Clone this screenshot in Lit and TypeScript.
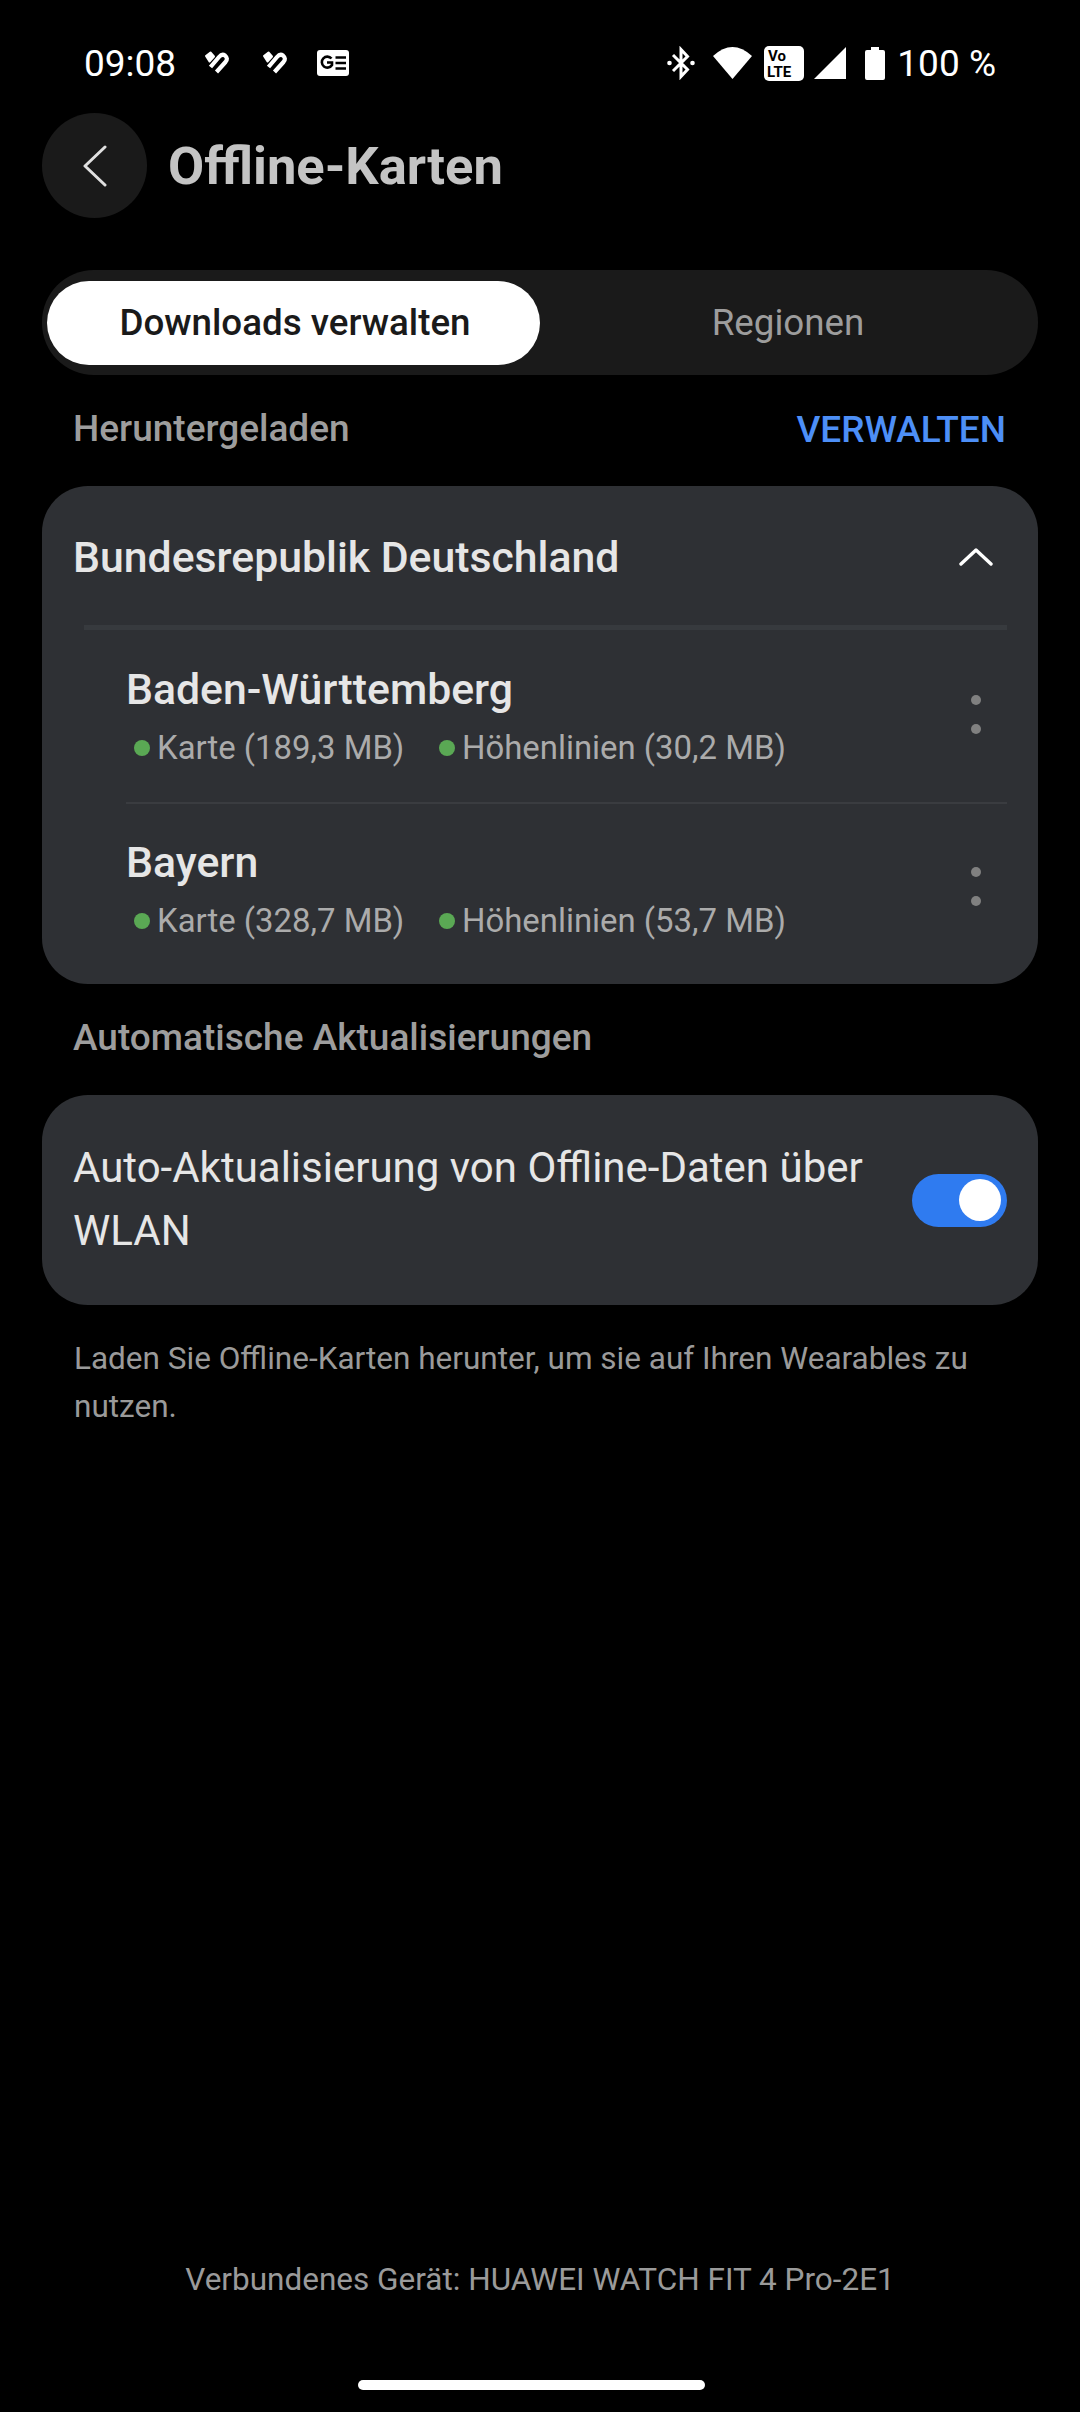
import { LitElement, html, css } from "lit";
import { customElement } from "lit/decorators.js";

const heart = html`<svg class="heart" viewBox="0 0 40 36" width="40" height="36">
  <path d="M11 11 L15.5 7.5 L19 11.5 L14.5 16.5 Z" fill="#fff" stroke="#fff" stroke-width="2" stroke-linejoin="round"/>
  <path d="M15.5 22 L24 12 Q27 8.5 30 10.5 Q33.5 13.5 30.5 17 L21.5 27" fill="none" stroke="#fff" stroke-width="4.2"/>
</svg>`;

const row = (name: string, a: string, b: string) => html`
  <div class="item">
    <div class="item-body">
      <div class="item-name">${name}</div>
      <div class="item-meta">
        <span class="tag a"><i class="dot"></i>${a}</span>
        <span class="tag"><i class="dot"></i>${b}</span>
      </div>
    </div>
    <div class="more"><i></i><i></i></div>
  </div>`;

@customElement("app-root")
export class AppRoot extends LitElement {
  static styles = css`
    :host {
      display: flex;
      flex-direction: column;
      width: 1080px;
      height: 2412px;
      background: #000;
      font-family: Roboto, "Noto Sans", sans-serif;
      color: #fff;
      overflow: hidden;
    }
    .status {
      height: 64px;
      padding: 31px 84px 0 84px;
      display: flex;
      align-items: center;
      box-sizing: content-box;
      flex: none;
    }
    .time { font-size: 37px; font-weight: 450; width: 111px; }
    .heart { margin-right: 18px; }
    .heart + .heart { margin-right: 24px; }
    .spacer { flex: 1; }
    .status-right { display: flex; align-items: center; }
    .m-wifi { margin-left: 18px; }
    .m-volte { margin-left: 12px; }
    .m-signal { margin-left: 10px; }
    .m-batt { margin-left: 19px; }
    .batt-text { font-size: 37px; margin-left: 12px; }
    .header {
      display: flex;
      align-items: center;
      margin: 18px 0 0 42px;
      flex: none;
    }
    .back {
      width: 105px;
      height: 105px;
      border-radius: 50%;
      background: #1a1a1a;
      display: flex;
      align-items: center;
      justify-content: center;
    }
    .title { font-size: 52.5px; font-weight: 700; color: #c4c4c4; margin-left: 21px; }
    .tabs {
      margin: 52px 42px 0;
      height: 105px;
      border-radius: 52px;
      background: #1a1a1a;
      display: flex;
      align-items: center;
      padding: 0 0 0 5px;
      flex: none;
    }
    .tab { flex: 1; text-align: center; font-size: 36.75px; color: #9d9d9d; }
    .tab.on {
      flex: none;
      width: 493px;
      height: 84px;
      line-height: 84px;
      padding-left: 3px;
      box-sizing: border-box;
      background: #fff;
      color: #1a1a1a;
      border-radius: 42px;
      font-weight: 500;
    }
    .tab.off { padding-right: 2px; }
    .sub-head {
      display: flex;
      justify-content: space-between;
      align-items: center;
      margin: 30px 74px 0 73px;
      height: 46px;
      flex: none;
    }
    .sub-head .l { font-size: 37px; color: #9d9d9d; font-weight: 500; }
    .sub-head .r { font-size: 37px; color: #4d8ff7; font-weight: 500; padding-top: 2px; }
    .card {
      margin: 35px 42px 0;
      background: #2e3034;
      border-radius: 46px;
      padding-bottom: 14px;
      flex: none;
    }
    .c-head {
      height: 139px;
      display: flex;
      align-items: center;
      justify-content: space-between;
      padding: 2px 45px 0 31px;
      box-sizing: border-box;
      font-size: 42.75px;
      font-weight: 500;
      color: #e6e6e6;
    }
    .rule { height: 5px; margin: 0 31px 0 42px; background: #373a3e; }
    .item {
      display: flex;
      align-items: center;
      padding: 0 31px 0 84px;
    }
    .item-body { flex: 1; border-bottom: 2px solid #3a3c40; height: 172px; }
    .item:last-child .item-body { border-bottom: none; height: 166px; }
    .item-name { font-size: 42.75px; font-weight: 500; color: #e6e6e6; margin-top: 36px; line-height: 47px; }
    .item:last-child .item-name { margin-top: 35px; }
    .item-meta { display: flex; margin-top: 16px; font-size: 32.9px; color: #ababab; line-height: 38px; }
    .tag { display: flex; align-items: center; }
    .tag.a { width: 305px; }
    .dot { width: 16px; height: 16px; border-radius: 50%; background: #5aa854; margin: 0 7px 0 8px; }
    .more { width: 0; display: flex; flex-direction: column; align-items: center; gap: 19px; margin-bottom: 5px; }
    .item:last-child .more { margin-bottom: 2px; }
    .more i { flex: none; width: 10px; height: 10px; border-radius: 50%; background: #808080; margin-left: -62px; }
    .label {
      margin: 31px 0 0 73px;
      height: 46px;
      line-height: 46px;
      font-size: 37px;
      font-weight: 500;
      color: #9d9d9d;
      flex: none;
    }
    .auto {
      margin-top: 34px;
      padding: 0 31px 0 31px;
      height: 210px;
      display: flex;
      align-items: center;
    }
    .auto-text { flex: 1; font-size: 42px; line-height: 63px; color: #e6e6e6; padding-bottom: 2px; }
    .toggle {
      width: 95px;
      height: 53px;
      border-radius: 27px;
      background: #2f7bf0;
      display: flex;
      align-items: center;
      justify-content: flex-end;
      padding-right: 6px;
      box-sizing: border-box;
    }
    .knob { width: 42px; height: 42px; border-radius: 50%; background: #fff; }
    .note {
      margin: 30px 60px 0 74px;
      font-size: 31.5px;
      line-height: 47.5px;
      color: #9a9a9a;
      flex: none;
    }
    .device {
      margin-top: auto;
      text-align: center;
      font-size: 31.5px;
      line-height: 40px;
      color: #9a9a9a;
      flex: none;
    }
    .home {
      width: 347px;
      height: 10px;
      border-radius: 5px;
      background: #fff;
      margin: 80px 0 22px 358px;
      flex: none;
    }
  `;

  render() {
    return html`
      <div class="status">
        <span class="time">09:08</span>
        ${heart}${heart}
        <svg width="33" height="26" viewBox="0 0 33 26">
          <rect x="0" y="0" width="32" height="26" rx="3" fill="#fff"/>
          <path d="M14.5 8.5 A5.5 5.5 0 1 0 15 15 L15 12.5 L10 12.5" fill="none" stroke="#000" stroke-width="2.6"/>
          <path d="M18.5 7.5H29M18.5 13H29M18.5 18.5H29" stroke="#000" stroke-width="2.4"/>
        </svg>
        <span class="spacer"></span>
        <div class="status-right">
          <svg width="28" height="34" viewBox="0 0 28 34" fill="none" stroke="#fff" stroke-width="3">
            <path d="M6 9 L20.5 23.5 L14 30.5 V3.5 L20.5 10.5 L6 25"/>
            <circle cx="2.5" cy="17" r="2.3" fill="#fff" stroke="none"/>
            <circle cx="25.5" cy="17" r="2.3" fill="#fff" stroke="none"/>
          </svg>
          <svg class="m-wifi" width="39" height="32" viewBox="0 0 39 32"><path d="M0 9 Q19.5 -9 39 9 L19.5 32 Z" fill="#fff"/></svg>
          <svg class="m-volte" width="40" height="35" viewBox="0 0 40 35">
            <rect width="40" height="35" rx="5" fill="#fff"/>
            <text x="4" y="15" font-family="Roboto" font-size="15" font-weight="700" fill="#000">Vo</text>
            <text x="3" y="31" font-family="Roboto" font-size="15" font-weight="700" fill="#000">LTE</text>
          </svg>
          <svg class="m-signal" width="32" height="32" viewBox="0 0 32 32"><path d="M0 32 L32 0 V32 Z" fill="#fff"/></svg>
          <svg class="m-batt" width="20" height="33" viewBox="0 0 20 33"><path d="M6 0H14V3H18Q20 3 20 5V31Q20 33 18 33H2Q0 33 0 31V5Q0 3 2 3H6Z" fill="#fff"/></svg>
          <span class="batt-text">100 %</span>
        </div>
      </div>

      <div class="header">
        <div class="back">
          <svg width="24" height="42" viewBox="0 0 24 42" fill="none" stroke="#e0e0e0" stroke-width="3" stroke-linecap="round" stroke-linejoin="round"><path d="M22 2 L2 21 L22 40"/></svg>
        </div>
        <div class="title">Offline-Karten</div>
      </div>

      <div class="tabs">
        <div class="tab on">Downloads verwalten</div>
        <div class="tab off">Regionen</div>
      </div>

      <div class="sub-head"><span class="l">Heruntergeladen</span><span class="r">VERWALTEN</span></div>

      <div class="card">
        <div class="c-head">
          <span>Bundesrepublik Deutschland</span>
          <svg width="34" height="18" viewBox="0 0 34 18" fill="none" stroke="#fff" stroke-width="3.4" stroke-linecap="round" stroke-linejoin="round"><path d="M2 16 L17 2 L32 16"/></svg>
        </div>
        <div class="rule"></div>
        ${row("Baden-Württemberg", "Karte (189,3 MB)", "Höhenlinien (30,2 MB)")}
        ${row("Bayern", "Karte (328,7 MB)", "Höhenlinien (53,7 MB)")}
      </div>

      <div class="label">Automatische Aktualisierungen</div>

      <div class="card auto">
        <div class="auto-text">Auto-Aktualisierung von Offline-Daten über<br>WLAN</div>
        <div class="toggle"><div class="knob"></div></div>
      </div>

      <div class="note">Laden Sie Offline-Karten herunter, um sie auf Ihren Wearables zu nutzen.</div>

      <div class="device">Verbundenes Gerät: HUAWEI WATCH FIT 4 Pro-2E1</div>
      <div class="home"></div>
    `;
  }
}
